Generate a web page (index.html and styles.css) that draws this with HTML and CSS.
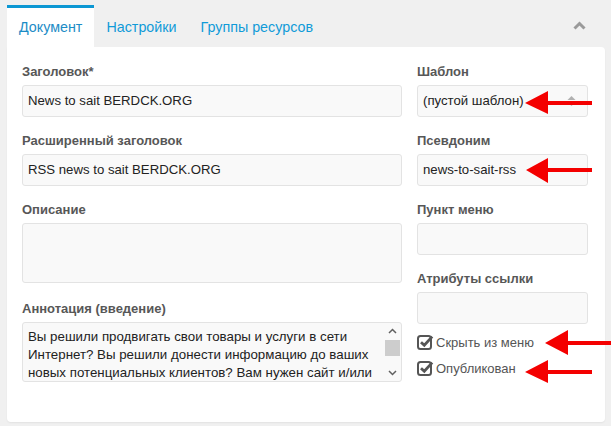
FILE: index.html
```html
<!DOCTYPE html>
<html lang="ru">
<head>
<meta charset="utf-8">
<title>Документ</title>
<link rel="stylesheet" href="styles.css">
</head>
<body>
<div class="page">
  <div class="tabs">
    <div class="tab active">Документ</div>
    <div class="tab">Настройки</div>
    <div class="tab">Группы ресурсов</div>
    <div class="collapse">
      <svg width="13" height="9" viewBox="0 0 13 9"><path d="M1.5 7.5 L6.5 2.5 L11.5 7.5" fill="none" stroke="#9a9a9a" stroke-width="3"/></svg>
    </div>
  </div>
  <div class="panel">
    <div class="col">
      <div class="field">
        <label class="lbl">Заголовок*</label>
        <div class="inp">News to sait BERDCK.ORG</div>
      </div>
      <div class="field">
        <label class="lbl">Расширенный заголовок</label>
        <div class="inp">RSS news to sait BERDCK.ORG</div>
      </div>
      <div class="field field-desc">
        <label class="lbl">Описание</label>
        <div class="inp area"></div>
      </div>
      <div class="field">
        <label class="lbl">Аннотация (введение)</label>
        <div class="inp area scrollarea">
          <div class="areatext">Вы решили продвигать свои товары и услуги в сети<br>Интернет? Вы решили донести информацию до ваших<br>новых потенциальных клиентов? Вам нужен сайт и/или</div>
          <div class="sbar">
            <div class="sbtn"><svg width="9" height="6" viewBox="0 0 9 6"><path d="M1 5 L4.5 1.5 L8 5" fill="none" stroke="#606060" stroke-width="1.5"/></svg></div>
            <div class="strack"><div class="sthumb"></div></div>
            <div class="sbtn"><svg width="9" height="6" viewBox="0 0 9 6"><path d="M1 1 L4.5 4.5 L8 1" fill="none" stroke="#606060" stroke-width="1.5"/></svg></div>
          </div>
        </div>
      </div>
    </div>
    <div class="col">
      <div class="field">
        <label class="lbl">Шаблон</label>
        <div class="inp select">(пустой шаблон)<span class="caret"><svg width="9" height="12" viewBox="0 0 9 12"><path d="M0.5 5 L4.5 1 L8.5 5 Z M0.5 7 L4.5 11 L8.5 7 Z" fill="#b0b0b0"/></svg></span></div>
      </div>
      <div class="field">
        <label class="lbl">Псевдоним</label>
        <div class="inp">news-to-sait-rss</div>
      </div>
      <div class="field">
        <label class="lbl">Пункт меню</label>
        <div class="inp"></div>
      </div>
      <div class="field field-attr">
        <label class="lbl">Атрибуты ссылки</label>
        <div class="inp"></div>
      </div>
      <div class="check">
        <svg width="17" height="16" viewBox="0 0 17 16"><rect x="1" y="2" width="13" height="13" rx="2.5" fill="none" stroke="#555" stroke-width="2"/><path d="M4 8.2 L7.3 11.3 L15.2 2.6" fill="none" stroke="#555" stroke-width="2.8"/></svg>
        <span>Скрыть из меню</span>
      </div>
      <div class="check">
        <svg width="17" height="16" viewBox="0 0 17 16"><rect x="1" y="2" width="13" height="13" rx="2.5" fill="none" stroke="#555" stroke-width="2"/><path d="M4 8.2 L7.3 11.3 L15.2 2.6" fill="none" stroke="#555" stroke-width="2.8"/></svg>
        <span>Опубликован</span>
      </div>
    </div>
  </div>
  <svg class="arrows" width="611" height="426" viewBox="0 0 611 426">
    <polygon points="525,103 548,91 548,101 592,101 592,105 548,105 548,114" fill="#f40000"/>
    <polygon points="526,170 548,158 548,168 592,168 592,172 548,172 548,183" fill="#f40000"/>
    <polygon points="545,343 568,330 568,341 611,341 611,345 568,345 568,355" fill="#f40000"/>
    <polygon points="525,372 548,360 548,370 592,370 592,374 548,374 548,383" fill="#f40000"/>
  </svg>
</div>
</body>
</html>
```
FILE: styles.css
```css
html, body {
  margin: 0;
  padding: 0;
}
body {
  background: #f0f0f0;
  font-family: "Liberation Sans", Arial, sans-serif;
  width: 611px;
  height: 426px;
  overflow: hidden;
}
.page {
  position: relative;
  padding: 5px 6px 0 7px;
}
.tabs {
  display: flex;
  align-items: stretch;
  height: 42px;
}
.tab {
  border-top: 3px solid transparent;
  padding: 0 12px;
  line-height: 39px;
  font-size: 14.3px;
  color: #109bd8;
}
.tab.active {
  background: #fff;
  border-top-color: #0c97d3;
  color: #1c8cc6;
}
.collapse {
  margin-left: auto;
  padding: 11px 19px 0 0;
}
.panel {
  background: #fff;
  border-radius: 0 4px 4px 4px;
  box-shadow: 0 1px 2px rgba(0,0,0,0.06);
  padding: 16px 17px 40px 15px;
  display: grid;
  grid-template-columns: 380px 171px;
  column-gap: 15px;
}
.col {
  display: flex;
  flex-direction: column;
}
.field {
  display: flex;
  flex-direction: column;
  margin-bottom: 15px;
}
.field:last-child {
  margin-bottom: 0;
}
.field-desc {
  margin-bottom: 17px;
}
.field-attr {
  margin-bottom: 5px;
}
.lbl {
  font-size: 13px;
  font-weight: bold;
  line-height: 18px;
  color: #575757;
  margin-bottom: 4px;
}
.inp {
  box-sizing: border-box;
  height: 32px;
  background: #f9f9f9;
  border: 1px solid #e3e3e3;
  border-radius: 3px;
  padding: 0 5px;
  font-size: 13.2px;
  line-height: 30px;
  color: #222;
  white-space: nowrap;
  overflow: hidden;
}
.area {
  height: 60px;
}
.scrollarea {
  display: flex;
  padding: 0 0 0 5px;
}
.areatext {
  flex: 1;
  padding-top: 5px;
  line-height: 18px;
  font-size: 13.3px;
  color: #222;
}
.sbar {
  width: 17px;
  display: flex;
  flex-direction: column;
}
.sbtn {
  height: 16px;
  display: flex;
  align-items: center;
  justify-content: center;
}
.strack {
  flex: 1;
  padding: 1px 1px;
}
.sthumb {
  height: 16px;
  background: #cdcdcd;
}
.select {
  display: flex;
  justify-content: space-between;
  align-items: center;
}
.caret {
  display: flex;
  margin-right: 6px;
}
.check {
  display: flex;
  align-items: center;
  height: 26px;
  font-size: 13px;
  color: #555;
}
.check svg {
  margin-right: 2px;
}
.arrows {
  position: absolute;
  left: 0;
  top: 0;
  pointer-events: none;
}
```
